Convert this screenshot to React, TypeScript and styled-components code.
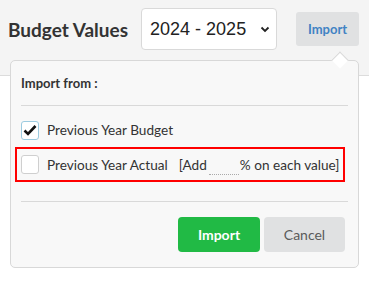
import React from "react";
import styled, { createGlobalStyle } from "styled-components";

const GlobalStyle = createGlobalStyle`
body {
    margin: 0;
    background: #ffffff;
    font-family: Lato, "Liberation Sans", sans-serif;
    color: #333;
}
`

const Page = styled.div`
position: relative;
width: 369px;
height: 281px;
`

const Header = styled.div`
display: flex;
align-items: center;
height: 58px;
padding: 0 10px 0 8px;
background: #f4f4f4;
`

const HeaderFill = styled.div`
height: 17px;
background: #f4f4f4;
border-bottom: 1px solid #dcdcdc;
`

const Title = styled.h1`
margin: 0 13px 0 0;
font-size: 19px;
font-weight: 700;
color: #333;
white-space: nowrap;
`

const YearSelect = styled.div`
display: flex;
align-items: center;
justify-content: space-between;
width: 136px;
height: 42px;
box-sizing: border-box;
padding: 0 6px 0 8px;
background: #fff;
border: 1px solid #d9d9d9;
border-radius: 4px;
font-family: "Liberation Sans", Arial, sans-serif;
font-size: 18px;
color: #222;
`

const TopButton = styled.button`
margin-left: 19px;
width: 63px;
height: 34px;
border: none;
border-radius: 3px;
background: #e0e1e2;
color: #4183c4;
font-family: Lato, sans-serif;
font-size: 13px;
font-weight: 700;
`

const Popover = styled.div`
position: absolute;
top: 60px;
left: 10px;
width: 349px;
height: 208px;
box-sizing: border-box;
padding: 14px 10px 0 10px;
background: #f8f8f8;
border: 1px solid #d8d8d8;
border-radius: 5px;
`

const Arrow = styled.div`
position: absolute;
top: -7px;
right: 12px;
width: 11px;
height: 11px;
background: #fff;
border-top: 1px solid #d8d8d8;
border-left: 1px solid #d8d8d8;
transform: rotate(45deg);
`

const Heading = styled.div`
font-size: 13px;
font-weight: 700;
color: #333;
line-height: 16px;
padding-bottom: 14px;
border-bottom: 1px solid #d9d9d9;
`

const Row = styled.label`
display: flex;
align-items: center;
height: 20px;
font-size: 13.6px;
color: #333;
white-space: nowrap;
`

const FirstRow = styled(Row)`
margin-top: 14px;
`

const Highlight = styled.div`
margin: 7px 3px 0 -6px;
padding: 0 0 0 4px;
height: 31px;
display: flex;
align-items: center;
border: 2px solid #ff0000;
`

const Box = styled.span<{ $checked?: boolean }>`
display: inline-flex;
align-items: center;
justify-content: center;
width: 18px;
height: 19px;
margin-right: 8px;
box-sizing: border-box;
background: #fff;
border: 1px solid ${(p) => (p.$checked ? "#9ccbe0" : "#cfcfcf")};
border-radius: 3px;
`

const Percent = styled.span`
display: inline-block;
width: 30px;
height: 19px;
margin: 0 1px 0 2px;
border-bottom: 1px dotted #aaa;
`

const Bracket = styled.span`
margin-left: 11px;
`

const Divider = styled.div`
margin-top: 19px;
border-bottom: 1px solid #d9d9d9;
`

const Actions = styled.div`
display: flex;
justify-content: flex-end;
gap: 4px;
margin: 15px 3px 0 0;
`

const ActionButton = styled.button<{ $primary?: boolean }>`
width: ${(p) => (p.$primary ? "82px" : "81px")};
height: 35px;
border: none;
border-radius: 4px;
background: ${(p) => (p.$primary ? "#21ba45" : "#e0e1e2")};
color: ${(p) => (p.$primary ? "#fff" : "#5a5a5a")};
font-family: Lato, sans-serif;
font-size: 14px;
font-weight: ${(p) => (p.$primary ? 700 : 400)};
`

const Check = () => (
    <svg width="14" height="12" viewBox="0 0 14 12">
        <path d="M1.5 6.5 L5 10 L12.5 2" fill="none" stroke="#111" strokeWidth="2.6" />
    </svg>
)

const Chevron = () => (
    <svg width="10" height="7" viewBox="0 0 10 7">
        <path d="M1.5 1.5 L5 5 L8.5 1.5" fill="none" stroke="#222" strokeWidth="1.8" />
    </svg>
)

export default function App() {
    return (
        <Page>
            <GlobalStyle />
            <Header>
                <Title>Budget Values</Title>
                <YearSelect>
                    2024 - 2025
                    <Chevron />
                </YearSelect>
                <TopButton>Import</TopButton>
            </Header>
            <HeaderFill />
            <Popover>
                <Arrow />
                <Heading>Import from :</Heading>
                <FirstRow>
                    <Box $checked><Check /></Box>
                    Previous Year Budget
                </FirstRow>
                <Highlight>
                    <Row>
                        <Box />
                        Previous Year Actual
                        <Bracket>[Add</Bracket>
                        <Percent />
                        % on each value]
                    </Row>
                </Highlight>
                <Divider />
                <Actions>
                    <ActionButton $primary>Import</ActionButton>
                    <ActionButton>Cancel</ActionButton>
                </Actions>
            </Popover>
        </Page>
    )
}
